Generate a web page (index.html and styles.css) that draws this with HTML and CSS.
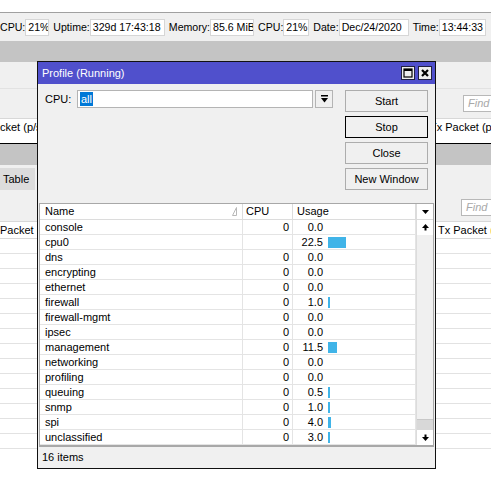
FILE: index.html
```
<!DOCTYPE html>
<html>
<head>
<meta charset="utf-8">
<link rel="stylesheet" href="styles.css">
</head>
<body>
<div class="desk">
  <div class="topgap"></div>
  <div class="statusbar">
    <div class="sf"><span class="sl">CPU:</span><span class="sb w24">21%</span></div>
    <div class="sf"><span class="sl">Uptime:</span><span class="sb w75">329d 17:43:18</span></div>
    <div class="sf"><span class="sl">Memory:</span><span class="sb w44">85.6 MiB</span></div>
    <div class="sf"><span class="sl">CPU:</span><span class="sb w26">21%</span></div>
    <div class="sf"><span class="sl">Date:</span><span class="sb w70">Dec/24/2020</span></div>
    <div class="sf"><span class="sl">Time:</span><span class="sb w47">13:44:33</span></div>
  </div>
  <div class="band"></div>
  <div class="toolbar"></div>
  <div class="findrow"><div class="find">Find</div></div>
  <div class="bhead bhead-top">
    <span class="bh-left">cket (p/s)</span>
    <span class="bh-right">Tx Packet (p/s)</span>
  </div>
  <div class="blank"></div>
  <div class="edge"></div>
  <div class="band"></div>
  <div class="tabs"><div class="tab">Table</div></div>
  <div class="findrow2"><div class="find find2">Find</div></div>
  <div class="bhead bhead-low">
    <span class="bh-left2">Packet <span class="orange">(</span></span>
    <span class="bh-right2">Tx Packet <span class="orange">(</span></span>
  </div>
  <div class="brows">
    <div class="brow"></div><div class="brow"></div><div class="brow"></div><div class="brow"></div>
    <div class="brow"></div><div class="brow"></div><div class="brow"></div><div class="brow"></div>
    <div class="brow"></div><div class="brow"></div><div class="brow"></div><div class="brow"></div>
    <div class="brow"></div><div class="brow"></div>
  </div>
</div>

<div class="win">
  <div class="titlebar">
    <span class="title">Profile (Running)</span>
    <div class="tbtns">
      <span class="tbtn"><svg width="10" height="10" viewBox="0 0 10 10"><rect x="1" y="1" width="8" height="8" fill="none" stroke="#000" stroke-width="1.2"/><rect x="1" y="1" width="8" height="2" fill="#000"/></svg></span>
      <span class="tbtn"><svg width="10" height="10" viewBox="0 0 10 10"><path d="M2 2 L8 8 M8 2 L2 8" stroke="#000" stroke-width="2.2"/></svg></span>
    </div>
  </div>
  <div class="wbody">
    <div class="wtop">
      <div class="form">
        <span class="flabel">CPU:</span>
        <div class="input"><span class="sel">all</span></div>
        <div class="dd"><svg width="7" height="8" viewBox="0 0 7 8"><rect x="0" y="0" width="7" height="1.5" fill="#000"/><polygon points="0,3 7,3 3.5,7.5" fill="#000"/></svg></div>
      </div>
      <div class="btns">
        <div class="btn">Start</div>
        <div class="btn btn-def">Stop</div>
        <div class="btn">Close</div>
        <div class="btn">New Window</div>
      </div>
    </div>
    <div class="list">
      <div class="grid">
        <div class="hc hc-name"><span>Name</span><svg class="sort" width="5" height="9" viewBox="0 0 5 9"><path d="M0.5 8.5 L4.5 0.5 L4.5 8.5 Z" fill="none" stroke="#b8b8b8" stroke-width="1"/></svg></div>
        <div class="hc hc-cpu">CPU</div>
        <div class="hc hc-usage">Usage</div>

        <div class="c c-name">console</div><div class="c c-cpu">0</div><div class="c c-usage"><span class="num">0.0</span></div>
        <div class="c c-name">cpu0</div><div class="c c-cpu"></div><div class="c c-usage"><span class="num">22.5</span><span class="bar" style="width:18px"></span></div>
        <div class="c c-name">dns</div><div class="c c-cpu">0</div><div class="c c-usage"><span class="num">0.0</span></div>
        <div class="c c-name">encrypting</div><div class="c c-cpu">0</div><div class="c c-usage"><span class="num">0.0</span></div>
        <div class="c c-name">ethernet</div><div class="c c-cpu">0</div><div class="c c-usage"><span class="num">0.0</span></div>
        <div class="c c-name">firewall</div><div class="c c-cpu">0</div><div class="c c-usage"><span class="num">1.0</span><span class="bar" style="width:2px"></span></div>
        <div class="c c-name">firewall-mgmt</div><div class="c c-cpu">0</div><div class="c c-usage"><span class="num">0.0</span></div>
        <div class="c c-name">ipsec</div><div class="c c-cpu">0</div><div class="c c-usage"><span class="num">0.0</span></div>
        <div class="c c-name">management</div><div class="c c-cpu">0</div><div class="c c-usage"><span class="num">11.5</span><span class="bar" style="width:9px"></span></div>
        <div class="c c-name">networking</div><div class="c c-cpu">0</div><div class="c c-usage"><span class="num">0.0</span></div>
        <div class="c c-name">profiling</div><div class="c c-cpu">0</div><div class="c c-usage"><span class="num">0.0</span></div>
        <div class="c c-name">queuing</div><div class="c c-cpu">0</div><div class="c c-usage"><span class="num">0.5</span><span class="bar" style="width:2px"></span></div>
        <div class="c c-name">snmp</div><div class="c c-cpu">0</div><div class="c c-usage"><span class="num">1.0</span><span class="bar" style="width:2px"></span></div>
        <div class="c c-name">spi</div><div class="c c-cpu">0</div><div class="c c-usage"><span class="num">4.0</span><span class="bar" style="width:3px"></span></div>
        <div class="c c-name">unclassified</div><div class="c c-cpu">0</div><div class="c c-usage"><span class="num">3.0</span><span class="bar" style="width:2px"></span></div>
      </div>
      <div class="scroll">
        <div class="sc-head"><svg width="7" height="4" viewBox="0 0 7 4"><polygon points="0,0 7,0 3.5,4" fill="#000"/></svg></div>
        <div class="sc-btn"><svg width="7" height="7" viewBox="0 0 7 7"><polygon points="0,4 3.5,0 7,4" fill="#000"/><rect x="2.5" y="4" width="2" height="2.5" fill="#000"/></svg></div>
        <div class="sc-track"><div class="sc-thumb"></div><div class="sc-rest"></div></div>
        <div class="sc-btn"><svg width="7" height="7" viewBox="0 0 7 7"><rect x="2.5" y="0.5" width="2" height="2.5" fill="#000"/><polygon points="0,3 7,3 3.5,7" fill="#000"/></svg></div>
      </div>
    </div>
    <div class="wstatus">16 items</div>
  </div>
</div>
</body>
</html>
```
FILE: styles.css
```
* { box-sizing: border-box; }
html, body { margin: 0; padding: 0; }
body {
  width: 491px;
  height: 493px;
  overflow: hidden;
  position: relative;
  background: #fff;
  color: #000;
  font-family: "Liberation Sans", Arial, sans-serif;
  font-size: 11px;
}

/* background window */
.desk { width: 491px; }
.topgap { height: 12px; background: #fff; }
.statusbar {
  height: 29px;
  border-top: 1px solid #a0a0a0;
  background: #f0f0f0;
  display: flex;
  align-items: center;
  gap: 4px;
  white-space: nowrap;
  font-size: 10.6px;
}
.sf { display: flex; align-items: center; flex: none; }
.sl { display: block; }
.sb {
  display: block;
  height: 17px;
  line-height: 15px;
  padding-left: 2px;
  background: #fff;
  border: 1px solid #d6d6d6;
  overflow: hidden;
}
.w24 { width: 24px; } .w26 { width: 26px; }
.w44 { width: 44px; } .w47 { width: 47px; }
.w70 { width: 70px; } .w75 { width: 75px; }

.band { height: 21px; background: #c4c4c4; }
.toolbar { height: 26px; background: #f0f0f0; }
.findrow {
  height: 30px;
  background: #f0f0f0;
  border-top: 1px solid #e2e2e2;
  display: flex;
  padding-top: 6px;
}
.find {
  margin-left: auto;
  width: 28px;
  height: 17px;
  background: #fff;
  border: 1px solid #b8b8b8;
  border-right: 0;
  color: #a8a8a8;
  font-style: italic;
  line-height: 15px;
  padding-left: 4px;
  overflow: hidden;
  white-space: nowrap;
}
.findrow2 {
  height: 26px;
  background: #f0f0f0;
  display: flex;
  padding-top: 4px;
}
.find2 { width: 30px; }

.bhead {
  display: flex;
  background: #fff;
  white-space: nowrap;
  overflow: hidden;
}
.bhead-top { height: 17px; border-top: 1px solid #d8d8d8; line-height: 16px; }
.bh-left { width: 430px; flex: none; }
.bh-right { flex: none; }
.bhead-low {
  height: 18px;
  border-top: 1px solid #d8d8d8;
  border-bottom: 1px solid #d8d8d8;
  line-height: 16px;
}
.bh-left2 { width: 438px; flex: none; }
.bh-right2 { flex: none; }
.orange { color: #e89a2c; }
.blank { height: 8px; background: #fff; }
.edge { height: 1px; background: #000; }
.tabs { height: 30px; background: #f0f0f0; padding-top: 3px; }
.tab {
  width: 35px;
  height: 22px;
  background: #dcdcdc;
  line-height: 22px;
  padding-left: 3px;
}
.brow { height: 15px; border-bottom: 1px solid #e2e2e2; background: #fff; }

/* profile window */
.win {
  position: absolute;
  left: 37px;
  top: 61px;
  width: 399px;
  height: 408px;
  border: 1px solid #111;
  background: #f0f0f0;
  display: flex;
  flex-direction: column;
}
.titlebar {
  height: 22px;
  background: #5050cc;
  color: #fff;
  display: flex;
  align-items: center;
  padding: 0 3px 0 4px;
}
.title { white-space: nowrap; }
.tbtns { margin-left: auto; display: flex; gap: 3px; }
.tbtn {
  width: 14px;
  height: 14px;
  background: #eeeeee;
  border: 1px solid #202040;
  display: flex;
  align-items: center;
  justify-content: center;
}
.wbody { flex: 1; display: flex; flex-direction: column; }
.wtop {
  height: 119px;
  display: flex;
  padding: 6px 7px 0 7px;
}
.form { display: flex; align-items: center; height: 18px; }
.flabel { width: 32px; }
.input {
  width: 236px;
  height: 18px;
  background: #fff;
  border: 1px solid #b4b4b4;
  padding: 1px 2px;
}
.sel {
  display: inline-block;
  background: #0078d7;
  color: #fff;
  line-height: 14px;
  padding: 0 1px;
}
.dd {
  width: 18px;
  height: 18px;
  margin-left: 2px;
  border: 1px solid #b4b4b4;
  background: #f0f0f0;
  display: flex;
  align-items: center;
  justify-content: center;
}
.btns {
  margin-left: auto;
  width: 83px;
  display: flex;
  flex-direction: column;
  gap: 4px;
}
.btn {
  height: 22px;
  border: 1px solid #adadad;
  background: #f0f0f0;
  text-align: center;
  line-height: 20px;
  white-space: nowrap;
}
.btn-def { border-color: #000; }

.list {
  height: 244px;
  margin: 0 1px;
  border: 1px solid #a8a8a8;
  border-bottom-width: 2px;
  display: flex;
  background: #fff;
}
.grid {
  display: grid;
  grid-template-columns: 203px 50px 123px;
  grid-template-rows: 16px;
  grid-auto-rows: 15px;
}
.hc {
  border-right: 1px solid #dcdcdc;
  border-bottom: 1px solid #dcdcdc;
  line-height: 15px;
  white-space: nowrap;
}
.hc-name { display: flex; align-items: center; justify-content: space-between; padding: 0 5px 0 5px; }
.sort { display: block; }
.hc-cpu { padding-left: 3px; }
.hc-usage { padding-left: 4px; }
.c {
  border-right: 1px solid #e4e4e4;
  border-bottom: 1px solid #e4e4e4;
  line-height: 15px;
  white-space: nowrap;
}
.c-name { padding-left: 5px; }
.c-cpu { text-align: right; padding-right: 3px; }
.c-usage { display: flex; align-items: center; }
.num { width: 30px; text-align: right; }
.bar { height: 11px; margin-left: 5px; background: #40b4e8; }

.scroll {
  width: 17px;
  display: flex;
  flex-direction: column;
  border-left: 1px solid #dcdcdc;
}
.sc-head {
  height: 16px;
  border-bottom: 1px solid #dcdcdc;
  display: flex;
  align-items: center;
  justify-content: center;
}
.sc-btn {
  height: 15px;
  display: flex;
  align-items: center;
  justify-content: center;
  background: #fff;
}
.sc-track { flex: 1; display: flex; flex-direction: column; }
.sc-thumb { flex: 1; background: #f0f0f0; border-bottom: 1px solid #c8c8c8; }
.sc-rest { height: 10px; background: #d8d8d8; }

.wstatus {
  flex: 1;
  padding-left: 4px;
  line-height: 20px;
  background: #f0f0f0;
}
```
